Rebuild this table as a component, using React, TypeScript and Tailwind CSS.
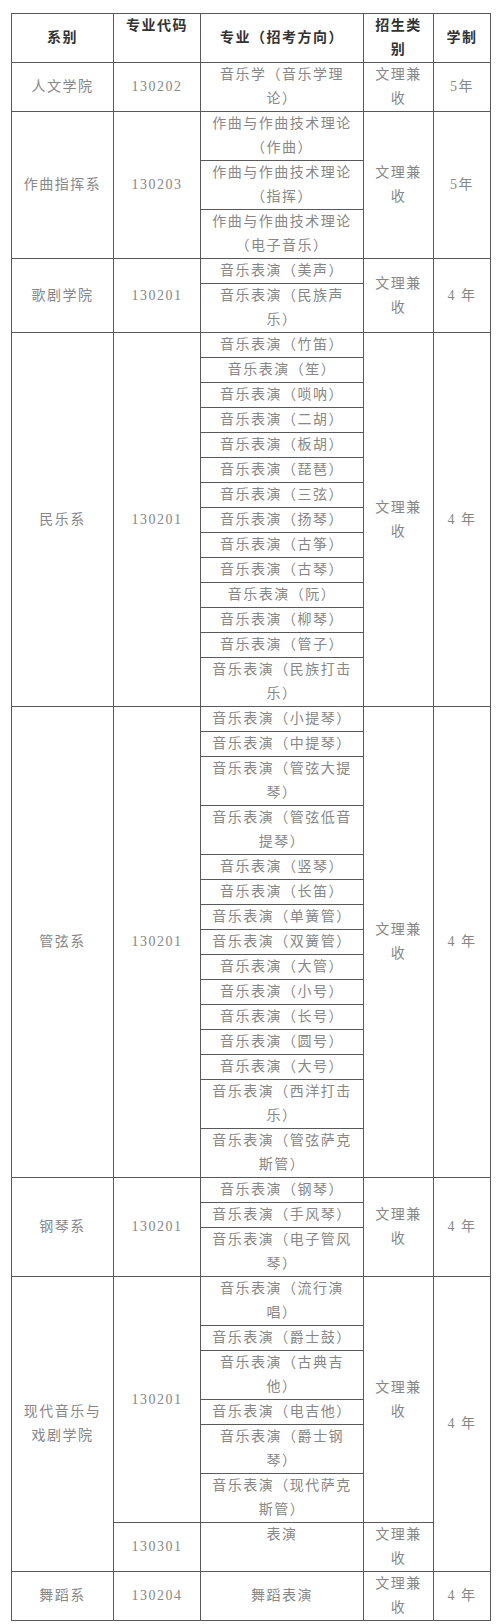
import React from 'react';

type Major = { lines: string[]; top?: boolean };
type Group = { code: string; majors: Major[]; kind: string[] };
type Dept = { name: string[]; groups: Group[]; years: string };

const one = (s: string): Major => ({ lines: [s] });
const two = (a: string, b: string): Major => ({ lines: [a, b] });
const perf = (s: string): Major => one(`音乐表演（${s}）`);

const KIND = ['文理兼', '收'];

const depts: Dept[] = [
  {
    name: ['人文学院'],
    groups: [{ code: '130202', majors: [two('音乐学（音乐学理', '论）')], kind: KIND }],
    years: '5年',
  },
  {
    name: ['作曲指挥系'],
    groups: [
      {
        code: '130203',
        majors: [
          two('作曲与作曲技术理论', '（作曲）'),
          two('作曲与作曲技术理论', '（指挥）'),
          two('作曲与作曲技术理论', '（电子音乐）'),
        ],
        kind: KIND,
      },
    ],
    years: '5年',
  },
  {
    name: ['歌剧学院'],
    groups: [{ code: '130201', majors: [perf('美声'), two('音乐表演（民族声', '乐）')], kind: KIND }],
    years: '4 年',
  },
  {
    name: ['民乐系'],
    groups: [
      {
        code: '130201',
        majors: [
          perf('竹笛'),
          perf('笙'),
          perf('唢呐'),
          perf('二胡'),
          perf('板胡'),
          perf('琵琶'),
          perf('三弦'),
          perf('扬琴'),
          perf('古筝'),
          perf('古琴'),
          perf('阮'),
          perf('柳琴'),
          perf('管子'),
          two('音乐表演（民族打击', '乐）'),
        ],
        kind: KIND,
      },
    ],
    years: '4 年',
  },
  {
    name: ['管弦系'],
    groups: [
      {
        code: '130201',
        majors: [
          perf('小提琴'),
          perf('中提琴'),
          two('音乐表演（管弦大提', '琴）'),
          two('音乐表演（管弦低音', '提琴）'),
          perf('竖琴'),
          perf('长笛'),
          perf('单簧管'),
          perf('双簧管'),
          perf('大管'),
          perf('小号'),
          perf('长号'),
          perf('圆号'),
          perf('大号'),
          two('音乐表演（西洋打击', '乐）'),
          two('音乐表演（管弦萨克', '斯管）'),
        ],
        kind: KIND,
      },
    ],
    years: '4 年',
  },
  {
    name: ['钢琴系'],
    groups: [
      {
        code: '130201',
        majors: [perf('钢琴'), perf('手风琴'), two('音乐表演（电子管风', '琴）')],
        kind: KIND,
      },
    ],
    years: '4 年',
  },
  {
    name: ['现代音乐与', '戏剧学院'],
    groups: [
      {
        code: '130201',
        majors: [
          two('音乐表演（流行演', '唱）'),
          perf('爵士鼓'),
          two('音乐表演（古典吉', '他）'),
          perf('电吉他'),
          two('音乐表演（爵士钢', '琴）'),
          two('音乐表演（现代萨克', '斯管）'),
        ],
        kind: KIND,
      },
      { code: '130301', majors: [{ lines: ['表演'], top: true }], kind: KIND },
    ],
    years: '4 年',
  },
  {
    name: ['舞蹈系'],
    groups: [{ code: '130204', majors: [one('舞蹈表演')], kind: KIND }],
    years: '4 年',
  },
];

const cell =
  'border border-[#595959] p-0 text-center align-middle leading-[24px] whitespace-nowrap text-[14px] tracking-[1.5px] text-[#878787]';
const head =
  'border border-[#595959] p-0 text-center align-middle leading-[24px] whitespace-nowrap text-[14px] tracking-[1.5px] font-bold text-[#333333]';

function Lines({ lines }: { lines: string[] }) {
  return (
    <>
      {lines.map((l, i) => (
        <div key={i}>{l}</div>
      ))}
    </>
  );
}

export default function App() {
  const rows: React.ReactNode[] = [];

  depts.forEach((dept, di) => {
    const total = dept.groups.reduce((n, g) => n + g.majors.length, 0);
    dept.groups.forEach((group, gi) => {
      group.majors.forEach((major, mi) => {
        const firstOfDept = gi === 0 && mi === 0;
        const firstOfGroup = mi === 0;
        rows.push(
          <tr key={`${di}-${gi}-${mi}`}>
            {firstOfDept && (
              <td rowSpan={total} className={cell}>
                <Lines lines={dept.name} />
              </td>
            )}
            {firstOfGroup && (
              <td rowSpan={group.majors.length} className={`${cell} tracking-[0.6px]`}>
                {group.code}
              </td>
            )}
            <td className={`${cell} ${major.top ? 'align-top' : ''}`}>
              <Lines lines={major.lines} />
            </td>
            {firstOfGroup && (
              <td rowSpan={group.majors.length} className={cell}>
                <Lines lines={group.kind} />
              </td>
            )}
            {firstOfDept && (
              <td rowSpan={total} className={cell}>
                {dept.years}
              </td>
            )}
          </tr>
        );
      });
    });
  });

  return (
    <div
      className="min-h-[1624px] w-[500px] overflow-hidden bg-white pt-[13px]"
      style={{ fontFamily: '"Liberation Serif", "Noto Sans CJK SC", sans-serif' }}
    >
      <table className="ml-[11px] w-[479px] table-fixed border-collapse">
        <colgroup>
          <col className="w-[102px]" />
          <col className="w-[87px]" />
          <col className="w-[163px]" />
          <col className="w-[70px]" />
          <col className="w-[57px]" />
        </colgroup>
        <thead>
          <tr>
            <th className={head}>系别</th>
            <th className={`${head} align-top`}>专业代码</th>
            <th className={head}>专业（招考方向）</th>
            <th className={head}>
              <div>招生类</div>
              <div>别</div>
            </th>
            <th className={head}>学制</th>
          </tr>
        </thead>
        <tbody>{rows}</tbody>
      </table>
    </div>
  );
}
